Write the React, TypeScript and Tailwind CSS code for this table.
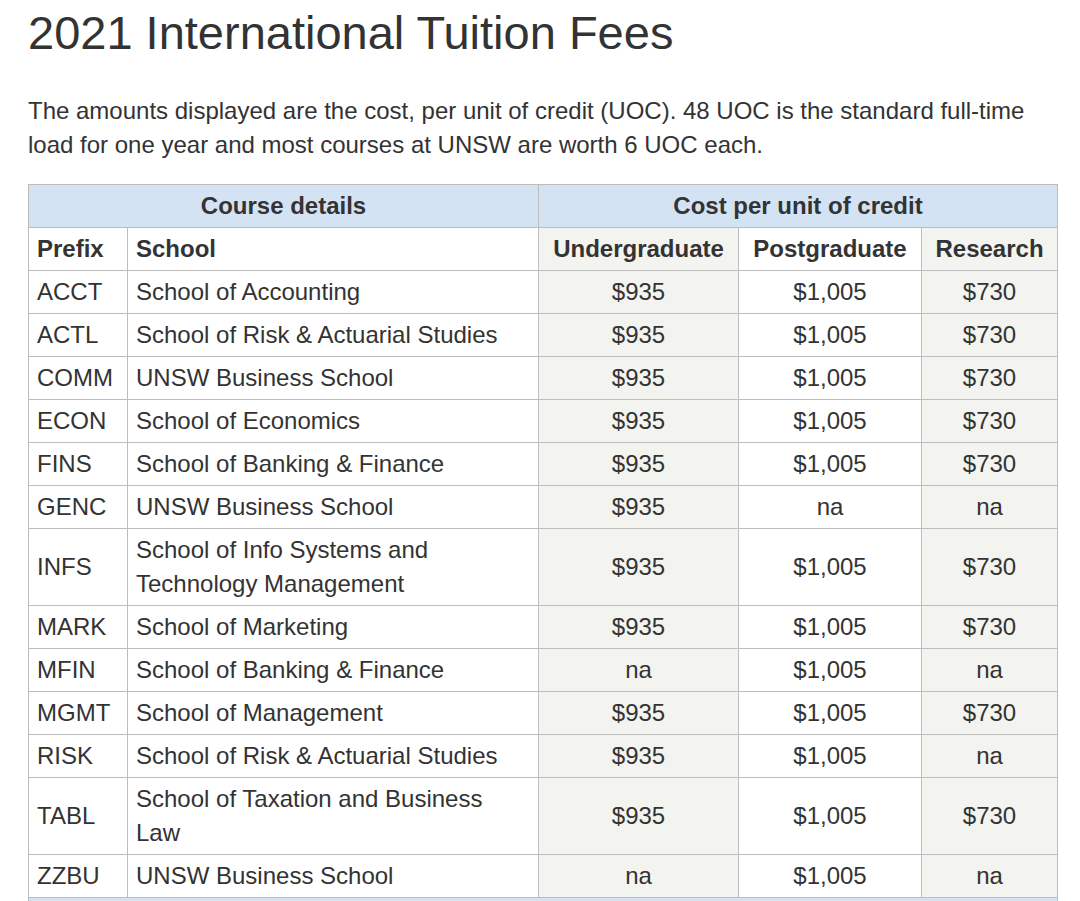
const rows: [string, string, string, string, string][] = [
  ['ACCT', 'School of Accounting', '$935', '$1,005', '$730'],
  ['ACTL', 'School of Risk & Actuarial Studies', '$935', '$1,005', '$730'],
  ['COMM', 'UNSW Business School', '$935', '$1,005', '$730'],
  ['ECON', 'School of Economics', '$935', '$1,005', '$730'],
  ['FINS', 'School of Banking & Finance', '$935', '$1,005', '$730'],
  ['GENC', 'UNSW Business School', '$935', 'na', 'na'],
  ['INFS', 'School of Info Systems and Technology Management', '$935', '$1,005', '$730'],
  ['MARK', 'School of Marketing', '$935', '$1,005', '$730'],
  ['MFIN', 'School of Banking & Finance', 'na', '$1,005', 'na'],
  ['MGMT', 'School of Management', '$935', '$1,005', '$730'],
  ['RISK', 'School of Risk & Actuarial Studies', '$935', '$1,005', 'na'],
  ['TABL', 'School of Taxation and Business Law', '$935', '$1,005', '$730'],
  ['ZZBU', 'UNSW Business School', 'na', '$1,005', 'na'],
];

const cell = 'border border-[#bdbdbd] px-2 py-1';

export default function App() {
  return (
    <div className="min-h-screen bg-white pl-7 pt-[5px] text-[#333] [font-family:'Liberation_Sans',Arial,sans-serif]">
      <h1 className="text-[47px] leading-[56px] font-normal text-[#333]">2021 International Tuition Fees</h1>
      <p className="mt-[33px] w-[1030px] text-[24px] leading-[34px]">
        The amounts displayed are the cost, per unit of credit (UOC). 48 UOC is the standard full-time load for one
        year and most courses at UNSW are worth 6 UOC each.
      </p>
      <table className="mt-[22px] w-[1029px] table-fixed border-collapse text-[24px] leading-[34px]">
        <colgroup>
          <col className="w-[99px]" />
          <col className="w-[411px]" />
          <col className="w-[200px]" />
          <col className="w-[183px]" />
          <col className="w-[136px]" />
        </colgroup>
        <thead>
          <tr className="bg-[#d4e3f3]">
            <th colSpan={2} className={`${cell} text-center font-bold`}>Course details</th>
            <th colSpan={3} className={`${cell} text-center font-bold`}>Cost per unit of credit</th>
          </tr>
          <tr>
            <th className={`${cell} text-left font-bold`}>Prefix</th>
            <th className={`${cell} text-left font-bold`}>School</th>
            <th className={`${cell} bg-[#f3f4f0] text-center font-bold`}>Undergraduate</th>
            <th className={`${cell} text-center font-bold`}>Postgraduate</th>
            <th className={`${cell} bg-[#f3f4f0] text-center font-bold`}>Research</th>
          </tr>
        </thead>
        <tbody>
          {rows.map(([prefix, school, ug, pg, res]) => (
            <tr key={prefix}>
              <td className={cell}>{prefix}</td>
              <td className={cell}>{school}</td>
              <td className={`${cell} bg-[#f3f4f0] text-center`}>{ug}</td>
              <td className={`${cell} text-center`}>{pg}</td>
              <td className={`${cell} bg-[#f3f4f0] text-center`}>{res}</td>
            </tr>
          ))}
          <tr className="bg-[#d4e3f3]">
            <td colSpan={5} className={cell}>&nbsp;</td>
          </tr>
        </tbody>
      </table>
    </div>
  );
}
